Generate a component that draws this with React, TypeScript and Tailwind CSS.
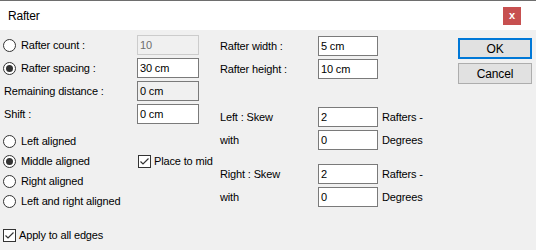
import React from 'react';

const Radio = ({ checked, label }: { checked?: boolean; label: string }) => (
  <div className="flex items-center">
    <span className="w-[13px] h-[13px] rounded-full border border-[#333] bg-white flex items-center justify-center">
      {checked && <span className="w-[7px] h-[7px] rounded-full bg-[#333]" />}
    </span>
    <span className="ml-[5px]">{label}</span>
  </div>
);

const Check = ({ label }: { label: string }) => (
  <div className="flex items-center">
    <span className="w-[13px] h-[13px] border border-[#333] bg-white flex items-center justify-center">
      <svg width="11" height="11" viewBox="0 0 11 11">
        <path d="M1.5 5.5 L4 8 L9.5 2.5" fill="none" stroke="#333" strokeWidth="1.2" />
      </svg>
    </span>
    <span className="ml-[3px]">{label}</span>
  </div>
);

const Field = ({ value, w = 'w-[62px]', kind = 'normal' }: { value: string; w?: string; kind?: 'normal' | 'disabled' | 'readonly' }) => {
  const style =
    kind === 'disabled'
      ? 'bg-[#f0f0f0] border-[#cccccc] text-[#6d6d6d]'
      : kind === 'readonly'
        ? 'bg-[#f0f0f0] border-[#7a7a7a] text-black'
        : 'bg-white border-[#7a7a7a] text-black';
  return (
    <div className={`${w} h-[20px] border ${style} pl-[2px] flex items-center leading-none`}>{value}</div>
  );
};

export default function App() {
  return (
    <div
      className="w-[536px] h-[250px] bg-[#f0f0f0] text-[11px] tracking-[-0.15px] text-black select-none"
      style={{ fontFamily: '"Liberation Sans", Arial, sans-serif' }}
    >
      {/* Title bar */}
      <div className="h-[30px] bg-white border-t border-[#6e6e6e] flex items-center justify-between pl-2 pr-[15px]">
        <span className="text-[12px] tracking-[-0.2px] mt-[1px]">Rafter</span>
        <span className="w-[18px] h-[18px] bg-[#c75050] text-white text-[11px] font-bold flex items-center justify-center leading-none">x</span>
      </div>

      <div className="flex pt-[5px]">
        {/* Left column */}
        <div className="w-[220px] pl-[3px] flex flex-col">
          <div className="flex flex-col gap-[3px]">
            <div className="h-[20px] flex items-center">
              <div className="w-[134px]"><Radio label="Rafter count :" /></div>
              <Field value="10" kind="disabled" />
            </div>
            <div className="h-[20px] flex items-center">
              <div className="w-[134px]"><Radio checked label="Rafter spacing :" /></div>
              <Field value="30 cm" />
            </div>
            <div className="h-[20px] flex items-center">
              <div className="w-[134px] pl-[1px]">Remaining distance :</div>
              <Field value="0 cm" kind="readonly" />
            </div>
            <div className="h-[20px] flex items-center">
              <div className="w-[134px] pl-[1px]">Shift :</div>
              <Field value="0 cm" />
            </div>
          </div>

          <div className="flex flex-col mt-[7px]">
            <div className="h-[20px] flex items-center"><Radio label="Left aligned" /></div>
            <div className="h-[20px] flex items-center">
              <div className="w-[135px]"><Radio checked label="Middle aligned" /></div>
              <Check label="Place to mid" />
            </div>
            <div className="h-[20px] flex items-center"><Radio label="Right aligned" /></div>
            <div className="h-[20px] flex items-center"><Radio label="Left and right aligned" /></div>
          </div>

          <div className="h-[20px] flex items-center mt-[14px]"><Check label="Apply to all edges" /></div>
        </div>

        {/* Middle column */}
        <div className="w-[238px] flex flex-col mt-[1px]">
          <div className="flex flex-col gap-[3px]">
            <div className="h-[20px] flex items-center">
              <div className="w-[98px]">Rafter width :</div>
              <Field value="5 cm" w="w-[60px]" />
            </div>
            <div className="h-[20px] flex items-center">
              <div className="w-[98px]">Rafter height :</div>
              <Field value="10 cm" w="w-[60px]" />
            </div>
          </div>

          <div className="flex flex-col gap-[3px] mt-[28px]">
            <div className="h-[20px] flex items-center">
              <div className="w-[98px]">Left : Skew</div>
              <Field value="2" w="w-[60px]" />
              <span className="ml-[4px]">Rafters -</span>
            </div>
            <div className="h-[20px] flex items-center">
              <div className="w-[98px]">with</div>
              <Field value="0" w="w-[60px]" />
              <span className="ml-[4px]">Degrees</span>
            </div>
          </div>

          <div className="flex flex-col gap-[3px] mt-[14px]">
            <div className="h-[20px] flex items-center">
              <div className="w-[98px]">Right : Skew</div>
              <Field value="2" w="w-[60px]" />
              <span className="ml-[4px]">Rafters -</span>
            </div>
            <div className="h-[20px] flex items-center">
              <div className="w-[98px]">with</div>
              <Field value="0" w="w-[60px]" />
              <span className="ml-[4px]">Degrees</span>
            </div>
          </div>
        </div>

        {/* Buttons */}
        <div className="flex flex-col gap-[4px] mt-[3px]">
          <button className="w-[74px] h-[21px] bg-[#e1e1e1] border-2 border-[#0078d7] text-[12px] flex items-center justify-center">OK</button>
          <button className="w-[74px] h-[21px] bg-[#e1e1e1] border border-[#adadad] text-[12px] flex items-center justify-center">Cancel</button>
        </div>
      </div>
    </div>
  );
}
